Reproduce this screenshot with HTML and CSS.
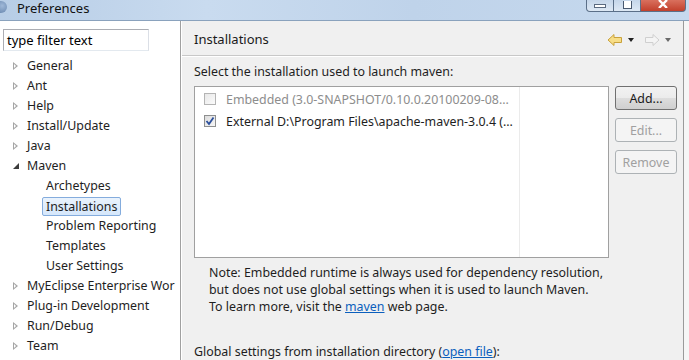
FILE: index.html
```html
<!DOCTYPE html>
<html lang="en">
<head>
    <meta charset="UTF-8">
    <title>Preferences</title>
    <link rel="stylesheet" href="styles.css">
</head>
<body>
    <div class="window">
        <div class="titlebar">
            <span class="app-icon"></span>
            <span class="title">Preferences</span>
            <div class="win-buttons">
                <span class="win-btn min"><i></i></span>
                <span class="win-btn max"><i></i></span>
                <span class="win-btn close">
                    <svg width="12" height="8" viewBox="0 0 12 8"><path d="M2 0 L10 8 M10 0 L2 8" stroke="#fff" stroke-width="2.4"/></svg>
                </span>
            </div>
        </div>

        <div class="main">
            <div class="sidebar">
                <div class="filter">type filter text</div>
                <ul class="tree">
                    <li class="node"><span class="twist"></span>General</li>
                    <li class="node"><span class="twist"></span>Ant</li>
                    <li class="node"><span class="twist"></span>Help</li>
                    <li class="node"><span class="twist"></span>Install/Update</li>
                    <li class="node"><span class="twist"></span>Java</li>
                    <li class="node"><span class="twist open"></span>Maven</li>
                    <li class="leaf">Archetypes</li>
                    <li class="leaf"><span class="selected">Installations</span></li>
                    <li class="leaf">Problem Reporting</li>
                    <li class="leaf">Templates</li>
                    <li class="leaf">User Settings</li>
                    <li class="node"><span class="twist"></span>MyEclipse Enterprise Wor</li>
                    <li class="node"><span class="twist"></span>Plug-in Development</li>
                    <li class="node"><span class="twist"></span>Run/Debug</li>
                    <li class="node"><span class="twist"></span>Team</li>
                </ul>
            </div>

            <div class="content">
                <div class="page-header">
                    <span class="page-title">Installations</span>
                    <div class="nav">
                        <svg width="16" height="14" viewBox="0 0 16 14"><path d="M1 7 L7 1.5 V4.5 H14.5 V9.5 H7 V12.5 Z" fill="#f7dd86" stroke="#c9a23c" stroke-width="1"/></svg>
                        <span class="drop"></span>
                        <svg class="fwd" width="16" height="14" viewBox="0 0 16 14"><path d="M15 7 L9 1.5 V4.5 H1.5 V9.5 H9 V12.5 Z" fill="#f4f4f4" stroke="#cfcfcf" stroke-width="1"/></svg>
                        <span class="drop dim"></span>
                    </div>
                </div>

                <div class="page-body">
                    <p class="label">Select the installation used to launch maven:</p>
                    <div class="installs">
                        <div class="list">
                            <div class="row disabled"><span class="check"></span>Embedded (3.0-SNAPSHOT/0.10.0.20100209-08...</div>
                            <div class="row"><span class="check on">
                                <svg width="10" height="10" viewBox="0 0 10 10"><path d="M1.5 5 L4 8 L8.5 1.5" fill="none" stroke="#2b4f9c" stroke-width="1.8"/></svg>
                            </span>External D:\Program Files\apache-maven-3.0.4 (...</div>
                        </div>
                        <div class="buttons">
                            <button class="btn">Add...</button>
                            <button class="btn" disabled>Edit...</button>
                            <button class="btn" disabled>Remove</button>
                        </div>
                    </div>
                    <p class="note">Note: Embedded runtime is always used for dependency resolution,<br>
                    but does not use global settings when it is used to launch Maven.<br>
                    To learn more, visit the <a href="#">maven</a> web page.</p>
                    <p class="label global">Global settings from installation directory (<a href="#">open file</a>):</p>
                </div>
            </div>
            <div class="edge"></div>
        </div>
    </div>
</body>
</html>
```

FILE: styles.css
```css
body {
    margin: 0;
    font-family: "Noto Sans", sans-serif;
    font-size: 12.4px;
    color: #1e1e1e;
    overflow: hidden;
}

.window {
    width: 689px;
    height: 360px;
    display: flex;
    flex-direction: column;
    background-color: #f0f0f0;
}

.titlebar {
    height: 20px;
    display: flex;
    align-items: flex-start;
    background: linear-gradient(90deg, #b7cde6 0%, #c9dbef 30%, #bfd3ea 60%, #c6d9ee 100%);
    border-bottom: 1px solid #8aa2bd;
    position: relative;
}

.app-icon {
    width: 12px;
    height: 12px;
    margin: 1px 0 0 -5px;
    border-radius: 50%;
    background: radial-gradient(circle at 60% 40%, #9fb8d8, #5f7fa8);
}

.title {
    margin-left: 10px;
    font-size: 13px;
    line-height: 16px;
    color: #111;
}

.win-buttons {
    position: absolute;
    right: 3px;
    top: 0;
    display: flex;
}

.win-btn {
    height: 11px;
    display: flex;
    align-items: flex-end;
    justify-content: center;
    border: 1px solid #5b6f88;
    border-top: none;
    background: linear-gradient(#c5d6ea, #dde8f4);
}

.win-btn.min {
    width: 26px;
    border-bottom-left-radius: 4px;
}

.win-btn.max {
    width: 26px;
    border-left: none;
}

.win-btn.min i {
    width: 10px;
    height: 2px;
    margin-bottom: 3px;
    border: 1px solid #5a6a80;
    background: #fff;
}

.win-btn.max i {
    width: 7px;
    height: 7px;
    margin-bottom: 2px;
    border: 1px solid #4a5a70;
    border-top: none;
    background: #fff;
}

.win-btn.close {
    width: 44px;
    border-left: none;
    border-bottom-right-radius: 4px;
    background: linear-gradient(#d9705e, #c2402c);
    align-items: flex-start;
}

.main {
    flex: 1;
    display: flex;
    min-height: 0;
}

.sidebar {
    width: 180px;
    background-color: #ffffff;
    border-right: 1px solid #a0a0a0;
}

.filter {
    margin: 8px 0 0 3px;
    width: 141px;
    height: 20px;
    padding-left: 3px;
    border: 1px solid #abadb3;
    border-right-color: #dbdfe6;
    border-bottom-color: #e3e9ef;
    font-size: 13px;
    line-height: 20px;
    color: #000;
}

.tree {
    list-style: none;
    margin: 5px 0 0 0;
    padding: 0;
    white-space: nowrap;
    overflow: hidden;
}

.tree li {
    height: 20px;
    line-height: 20px;
    display: flex;
    align-items: center;
}

.node {
    padding-left: 13px;
}

.leaf {
    padding-left: 46px;
}

.twist {
    flex-shrink: 0;
    width: 0;
    height: 0;
    margin-right: 9px;
    border-top: 4px solid transparent;
    border-bottom: 4px solid transparent;
    border-left: 5px solid #a6a6a6;
    position: relative;
}

.twist::after {
    content: "";
    position: absolute;
    left: -4px;
    top: -2px;
    border-top: 2px solid transparent;
    border-bottom: 2px solid transparent;
    border-left: 2.5px solid #ffffff;
}

.twist.open {
    border: none;
    width: 0;
    height: 0;
    border-left: 6px solid transparent;
    border-bottom: 6px solid #3c3c3c;
    margin-right: 8px;
}

.twist.open::after {
    display: none;
}

.selected {
    margin-left: -4px;
    padding: 0 3px;
    height: 17px;
    line-height: 17px;
    border: 1px solid #84acdd;
    border-radius: 2px;
    background: linear-gradient(#eaf3fd, #d5e7fb);
}

.content {
    flex: 1;
    display: flex;
    flex-direction: column;
    border-left: 1px solid #ffffff;
}

.page-header {
    height: 36px;
    display: flex;
    align-items: center;
    justify-content: space-between;
    padding: 2px 12px 0 12px;
    border-bottom: 1px solid #c8c8c8;
    box-shadow: 0 1px 0 #ffffff;
}

.page-title {
    font-size: 13px;
    color: #1a1a1a;
}

.nav {
    display: flex;
    align-items: center;
    margin-top: 1px;
}

.drop {
    width: 0;
    height: 0;
    margin: 0 6px 0 5px;
    border-left: 3.5px solid transparent;
    border-right: 3.5px solid transparent;
    border-top: 4px solid #202020;
}

.drop.dim {
    border-top-color: #6a6a6a;
    margin-right: 0;
}

.fwd {
    margin-left: 4px;
}

.page-body {
    padding: 0 0 0 12px;
}

.label {
    margin: 8px 0 0 0;
    line-height: 16px;
}

.installs {
    display: flex;
    margin-top: 6px;
    gap: 6px;
}

.list {
    width: 325px;
    height: 169px;
    padding-top: 1px;
    border: 1px solid #a0a0a0;
    background: linear-gradient(90deg, #ffffff 0 324px, #ebebeb 324px 325px, #ffffff 325px);
    padding-right: 88px;
}

.row {
    height: 22px;
    display: flex;
    align-items: center;
    padding-left: 9px;
    white-space: nowrap;
}

.row.disabled {
    color: #8d8d8d;
}

.check {
    flex-shrink: 0;
    width: 10px;
    height: 10px;
    margin-right: 10px;
    border: 1px solid #8e8f8f;
    background: linear-gradient(135deg, #dcdcdc, #f7f7f7);
    display: flex;
    align-items: center;
    justify-content: center;
}

.row.disabled .check {
    border-color: #b4b4b4;
    background: linear-gradient(135deg, #e8e8e8, #fbfbfb);
}

.buttons {
    display: flex;
    flex-direction: column;
    gap: 8px;
}

.btn {
    width: 62px;
    height: 24px;
    padding: 0;
    font-family: "Noto Sans", sans-serif;
    font-size: 12.4px;
    color: #1a1a1a;
    border: 1px solid #707070;
    border-radius: 3px;
    background: linear-gradient(#f2f2f2 0%, #ebebeb 50%, #dddddd 51%, #cfcfcf 100%);
}

.btn:disabled {
    color: #a0a0a0;
    border-color: #adb2b5;
    background: #f4f4f4;
}

.note {
    margin: 6px 0 0 15px;
    line-height: 17px;
}

a {
    color: #0b5fbd;
}

.global {
    margin-top: 29px;
}

.edge {
    width: 5px;
    border-left: 1px solid #9a9a9a;
    background-color: #f6f6f6;
}
```
